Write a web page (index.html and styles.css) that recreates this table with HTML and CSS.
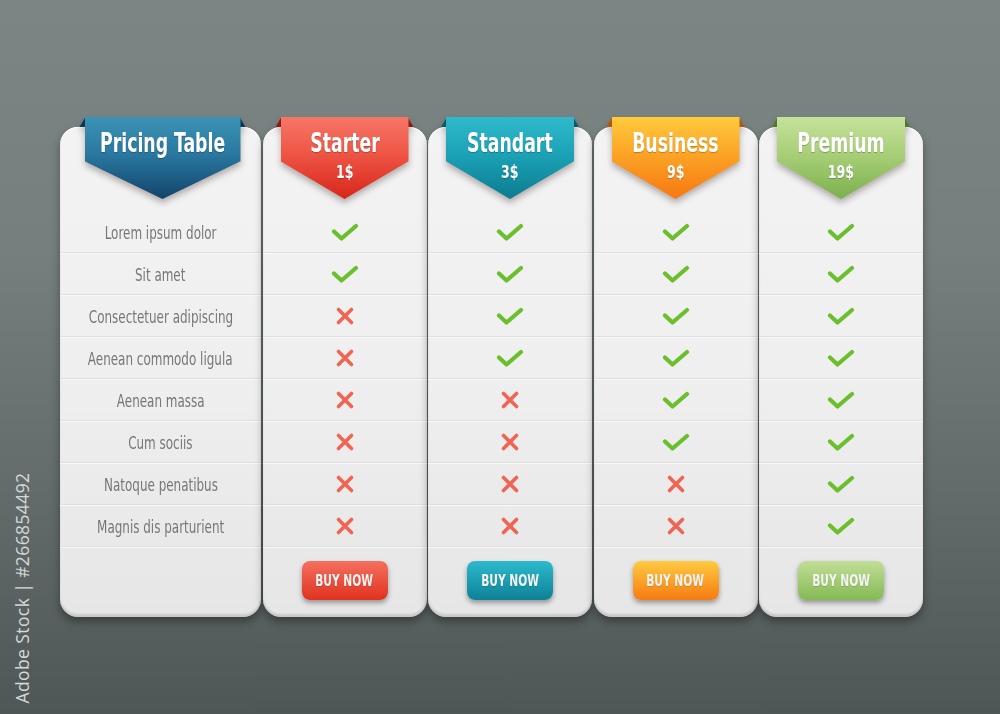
FILE: index.html
```html
<!DOCTYPE html>
<html>
<head>
<meta charset="utf-8">
<link rel="stylesheet" href="styles.css">
</head>
<body>
<div class="stage">
  <div class="card card-labels">
    <div class="head">
      <div class="ribbon r-blue">
        <span class="ear ear-l"></span><span class="ear ear-r"></span>
        <div class="ribbon-body"><div class="r-title">Pricing Table</div></div>
      </div>
    </div>
    <div class="row"><span class="label">Lorem ipsum dolor</span></div>
    <div class="row"><span class="label">Sit amet</span></div>
    <div class="row"><span class="label">Consectetuer adipiscing</span></div>
    <div class="row"><span class="label">Aenean commodo ligula</span></div>
    <div class="row"><span class="label">Aenean massa</span></div>
    <div class="row"><span class="label">Cum sociis</span></div>
    <div class="row"><span class="label">Natoque penatibus</span></div>
    <div class="row"><span class="label">Magnis dis parturient</span></div>
    <div class="foot"></div>
  </div>

  <div class="card">
    <div class="head">
      <div class="ribbon r-red">
        <span class="ear ear-l"></span><span class="ear ear-r"></span>
        <div class="ribbon-body"><div class="r-title">Starter</div><div class="r-price">1$</div></div>
      </div>
    </div>
    <div class="row"><span class="yes"></span></div>
    <div class="row"><span class="yes"></span></div>
    <div class="row"><span class="no"></span></div>
    <div class="row"><span class="no"></span></div>
    <div class="row"><span class="no"></span></div>
    <div class="row"><span class="no"></span></div>
    <div class="row"><span class="no"></span></div>
    <div class="row"><span class="no"></span></div>
    <div class="foot"><a class="btn b-red"><span>BUY NOW</span></a></div>
  </div>

  <div class="card">
    <div class="head">
      <div class="ribbon r-teal">
        <span class="ear ear-l"></span><span class="ear ear-r"></span>
        <div class="ribbon-body"><div class="r-title">Standart</div><div class="r-price">3$</div></div>
      </div>
    </div>
    <div class="row"><span class="yes"></span></div>
    <div class="row"><span class="yes"></span></div>
    <div class="row"><span class="yes"></span></div>
    <div class="row"><span class="yes"></span></div>
    <div class="row"><span class="no"></span></div>
    <div class="row"><span class="no"></span></div>
    <div class="row"><span class="no"></span></div>
    <div class="row"><span class="no"></span></div>
    <div class="foot"><a class="btn b-teal"><span>BUY NOW</span></a></div>
  </div>

  <div class="card">
    <div class="head">
      <div class="ribbon r-orange">
        <span class="ear ear-l"></span><span class="ear ear-r"></span>
        <div class="ribbon-body"><div class="r-title">Business</div><div class="r-price">9$</div></div>
      </div>
    </div>
    <div class="row"><span class="yes"></span></div>
    <div class="row"><span class="yes"></span></div>
    <div class="row"><span class="yes"></span></div>
    <div class="row"><span class="yes"></span></div>
    <div class="row"><span class="yes"></span></div>
    <div class="row"><span class="yes"></span></div>
    <div class="row"><span class="no"></span></div>
    <div class="row"><span class="no"></span></div>
    <div class="foot"><a class="btn b-orange"><span>BUY NOW</span></a></div>
  </div>

  <div class="card">
    <div class="head">
      <div class="ribbon r-green">
        <span class="ear ear-l"></span><span class="ear ear-r"></span>
        <div class="ribbon-body"><div class="r-title">Premium</div><div class="r-price">19$</div></div>
      </div>
    </div>
    <div class="row"><span class="yes"></span></div>
    <div class="row"><span class="yes"></span></div>
    <div class="row"><span class="yes"></span></div>
    <div class="row"><span class="yes"></span></div>
    <div class="row"><span class="yes"></span></div>
    <div class="row"><span class="yes"></span></div>
    <div class="row"><span class="yes"></span></div>
    <div class="row"><span class="yes"></span></div>
    <div class="foot"><a class="btn b-green"><span>BUY NOW</span></a></div>
  </div>
</div>
<div class="stock">Adobe Stock | #266854492</div>
</body>
</html>
```

FILE: styles.css
```css
html, body {
  margin: 0;
  padding: 0;
}
body {
  width: 1000px;
  height: 714px;
  overflow: hidden;
  position: relative;
  background: linear-gradient(180deg, #7b8584 0%, #757f7e 35%, #626b6a 70%, #4f5756 100%);
  font-family: "DejaVu Sans Condensed", "DejaVu Sans", sans-serif;
  font-stretch: condensed;
}
.stage {
  display: flex;
  gap: 1.5px;
  padding: 127px 0 0 60px;
}
.card {
  width: 164px;
  display: flex;
  flex-direction: column;
  background: linear-gradient(180deg, #f3f3f3 0%, #efefef 50%, #e6e6e6 100%);
  border-radius: 18px;
  box-shadow: 0 5px 8px rgba(0, 0, 0, 0.35), inset 0 -3px 2px rgba(0, 0, 0, 0.12), inset 0 1px 0 #fff;
}
.card-labels {
  width: 201px;
}
.head {
  height: 84px;
  display: flex;
  justify-content: center;
}
.ribbon {
  position: relative;
  margin-top: -10px;
  width: 128px;
  height: 82px;
  filter: drop-shadow(0 4px 3px rgba(60, 40, 40, 0.35));
}
.card-labels .ribbon {
  width: 156px;
  margin-left: 4px;
}
.ribbon-body {
  height: 100%;
  clip-path: polygon(0 0, 100% 0, 100% 54%, 50% 100%, 0 54%);
  display: flex;
  flex-direction: column;
  align-items: center;
  color: #fff;
  font-weight: bold;
}
.r-title {
  font-size: 26px;
  line-height: 28px;
  margin-top: 12px;
  white-space: nowrap;
  transform: scaleX(0.74);
  text-shadow: 0 1px 1px rgba(0, 0, 0, 0.25);
}
.r-price {
  font-size: 17px;
  line-height: 18px;
  margin-top: 6px;
  transform: scaleX(0.82);
  text-shadow: 0 1px 1px rgba(0, 0, 0, 0.25);
}
.ear {
  position: absolute;
  top: 0;
  width: 6px;
  height: 10px;
}
.ear-l {
  left: -5px;
  clip-path: polygon(100% 0, 100% 100%, 0 100%);
}
.ear-r {
  right: -5px;
  clip-path: polygon(0 0, 100% 100%, 0 100%);
}
.r-blue .ribbon-body { background: linear-gradient(180deg, #3b93b4 0%, #2a78a0 45%, #12446b 100%); }
.r-blue .ear { background: #0e3553; }
.r-red .ribbon-body { background: linear-gradient(180deg, #f77667 0%, #ee5545 45%, #d8261a 100%); }
.r-red .ear { background: #8e1a12; }
.r-teal .ribbon-body { background: linear-gradient(180deg, #30b9cb 0%, #1ca2b6 45%, #0b7c90 100%); }
.r-teal .ear { background: #0a5a68; }
.r-orange .ribbon-body { background: linear-gradient(180deg, #ffca3e 0%, #fca426 45%, #f67812 100%); }
.r-orange .ear { background: #b5560a; }
.r-green .ribbon-body { background: linear-gradient(180deg, #c6e19c 0%, #a8cf78 45%, #7bb14c 100%); }
.r-green .ear { background: #4f7a2c; }

.row {
  height: 41px;
  border-bottom: 1px solid #dedede;
  box-shadow: 0 1px 0 #f9f9f9;
  display: flex;
  align-items: center;
  justify-content: center;
}
.label {
  display: inline-block;
  white-space: nowrap;
  color: #777;
  font-size: 17.5px;
  margin-top: 3px;
  transform: scaleX(0.76);
}
.yes {
  width: 28px;
  height: 18px;
  display: block;
  background: url("data:image/svg+xml;utf8,<svg xmlns='http://www.w3.org/2000/svg' width='28' height='18' viewBox='0 0 28 18'><path d='M3 8.5 L10.5 15.5 L25 3' fill='none' stroke='%236bbf2c' stroke-width='4.2' stroke-linecap='round' stroke-linejoin='round'/></svg>") no-repeat center;
}
.no {
  width: 20px;
  height: 20px;
  display: block;
  background: url("data:image/svg+xml;utf8,<svg xmlns='http://www.w3.org/2000/svg' width='20' height='20' viewBox='0 0 20 20'><path d='M3.5 3.5 L16.5 16.5 M16.5 3.5 L3.5 16.5' fill='none' stroke='%23f26452' stroke-width='3.6' stroke-linecap='round'/></svg>") no-repeat center;
}
.foot {
  height: 70px;
  display: flex;
  justify-content: center;
  align-items: flex-start;
}
.btn {
  margin-top: 14px;
  width: 86px;
  height: 39px;
  border-radius: 8px;
  display: flex;
  align-items: center;
  justify-content: center;
  color: #f4f4f4;
  font-weight: bold;
  font-size: 16px;
  box-shadow: 0 3px 5px rgba(0, 0, 0, 0.35);
  text-shadow: 0 1px 1px rgba(0, 0, 0, 0.15);
}
.btn span {
  display: inline-block;
  white-space: nowrap;
  transform: scaleX(0.74);
}
.b-red { background: linear-gradient(180deg, #f4705f 0%, #e1311f 100%); }
.b-teal { background: linear-gradient(180deg, #2dbacd 0%, #0d8196 100%); }
.b-orange { background: linear-gradient(180deg, #ffcb40 0%, #f67a12 100%); }
.b-green { background: linear-gradient(180deg, #c2de98 0%, #84b954 100%); }

.stock {
  position: absolute;
  left: 22px;
  top: 588px;
  transform: translate(-50%, -50%) rotate(-90deg);
  white-space: nowrap;
  font-family: "Open Sans", "DejaVu Sans", sans-serif;
  font-stretch: normal;
  font-size: 17.5px;
  color: #d3d8d8;
  letter-spacing: 0.4px;
}
```
